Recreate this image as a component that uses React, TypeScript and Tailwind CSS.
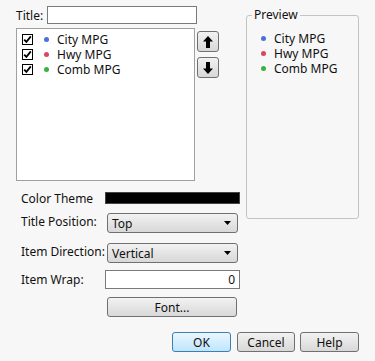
import type { ReactNode } from 'react';

const items = [
  { label: 'City MPG', color: '#4a72dc' },
  { label: 'Hwy MPG', color: '#d9475c' },
  { label: 'Comb MPG', color: '#3bb043' },
];

function Check() {
  return (
    <svg width="11" height="11" viewBox="0 0 11 11" className="block">
      <rect x="0.5" y="0.5" width="10" height="10" fill="white" stroke="#000" />
      <path d="M2.2 5.6 L4.4 7.9 L8.8 2.4" fill="none" stroke="#000" strokeWidth="1.8" />
    </svg>
  );
}

function Dot({ color }: { color: string }) {
  return <span className="block w-[5px] h-[5px] rounded-full" style={{ backgroundColor: color }} />;
}

function Arrow({ down }: { down?: boolean }) {
  return (
    <svg width="10" height="12" viewBox="0 0 10 12" className={down ? 'rotate-180' : ''}>
      <path d="M5 0 L10 5.5 H7 V12 H3 V5.5 H0 Z" fill="#000" />
    </svg>
  );
}

function Btn({ children, className = '', primary }: { children: ReactNode; className?: string; primary?: boolean }) {
  return (
    <div
      className={`flex items-center justify-center h-[20px] rounded-[3px] border ${
        primary
          ? 'border-[#3c7fb1] bg-gradient-to-b from-[#eaf6fd] to-[#bee6fd]'
          : 'border-[#707070] bg-gradient-to-b from-[#f2f2f2] to-[#d8d8d8]'
      } ${className}`}
    >
      {children}
    </div>
  );
}

function Select({ value }: { value: string }) {
  return (
    <div className="flex items-center justify-between w-[131px] h-[20px] rounded-[3px] border border-[#707070] bg-gradient-to-b from-[#f2f2f2] to-[#d8d8d8] pl-[4px] pr-[6px]">
      <span>{value}</span>
      <svg width="7" height="4" viewBox="0 0 7 4">
        <path d="M0 0 H7 L3.5 4 Z" fill="#000" />
      </svg>
    </div>
  );
}

export default function App() {
  return (
    <div
      className="w-[375px] h-[361px] bg-[#f7f7f7] text-[12px] leading-[15px] text-[#111]"
      style={{ fontFamily: '"Noto Sans", "Open Sans", sans-serif' }}
    >
      <div className="flex pt-[6px] pl-[16px]">
        <div className="w-[224px] flex flex-col">
          <div className="flex items-center h-[18px]">
            <span className="w-[31px]">Title:</span>
            <div className="w-[150px] h-[18px] border border-[#7a7a7a] bg-white" />
          </div>

          <div className="flex mt-[4px]">
            <div className="w-[179px] h-[153px] border border-[#a0a0a0] bg-white pt-[3px] pl-[5px]">
              {items.map(it => (
                <div key={it.label} className="flex items-center h-[15px]">
                  <Check />
                  <span className="ml-[11px]"><Dot color={it.color} /></span>
                  <span className="ml-[8px]">{it.label}</span>
                </div>
              ))}
            </div>
            <div className="flex flex-col gap-[5px] ml-[2px] pt-[3px]">
              <Btn className="w-[22px] !h-[21px]"><Arrow /></Btn>
              <Btn className="w-[22px] !h-[21px]"><Arrow down /></Btn>
            </div>
          </div>

          <div className="flex items-center h-[12px] mt-[11px] pl-[5px]">
            <span className="w-[84px]">Color Theme</span>
            <div className="w-[135px] h-[12px] bg-black border border-[#444]" />
          </div>

          <div className="flex items-center h-[20px] mt-[9px] pl-[5px]">
            <span className="w-[86px] -mt-[4px]">Title Position:</span>
            <Select value="Top" />
          </div>

          <div className="flex items-center h-[20px] mt-[10px] pl-[5px]">
            <span className="w-[86px] -mt-[4px]">Item Direction:</span>
            <Select value="Vertical" />
          </div>

          <div className="flex items-center h-[19px] mt-[7px] pl-[5px]">
            <span className="w-[84px]">Item Wrap:</span>
            <div className="w-[135px] h-[19px] border border-[#7a7a7a] bg-white text-right pr-[4px] leading-[17px]">0</div>
          </div>

          <div className="mt-[8px] ml-[91px]">
            <Btn className="w-[130px]">Font...</Btn>
          </div>
        </div>

        <fieldset className="ml-[6px] mt-[1px] w-[113px] h-[212px] border border-[#c4c4c4] rounded-[3px]">
          <legend className="ml-[5px] px-[2px] leading-[16px]">Preview</legend>
          <div className="pt-[8px] pl-[14px]">
            {items.map(it => (
              <div key={it.label} className="flex items-center h-[15px]">
                <Dot color={it.color} />
                <span className="ml-[8px]">{it.label}</span>
              </div>
            ))}
          </div>
        </fieldset>
      </div>

      <div className="flex justify-end pr-[16px] mt-[15px]">
        <Btn primary className="w-[59px]">OK</Btn>
        <Btn className="w-[58px] ml-[6px]">Cancel</Btn>
        <Btn className="w-[59px] ml-[5px]">Help</Btn>
      </div>
    </div>
  );
}
